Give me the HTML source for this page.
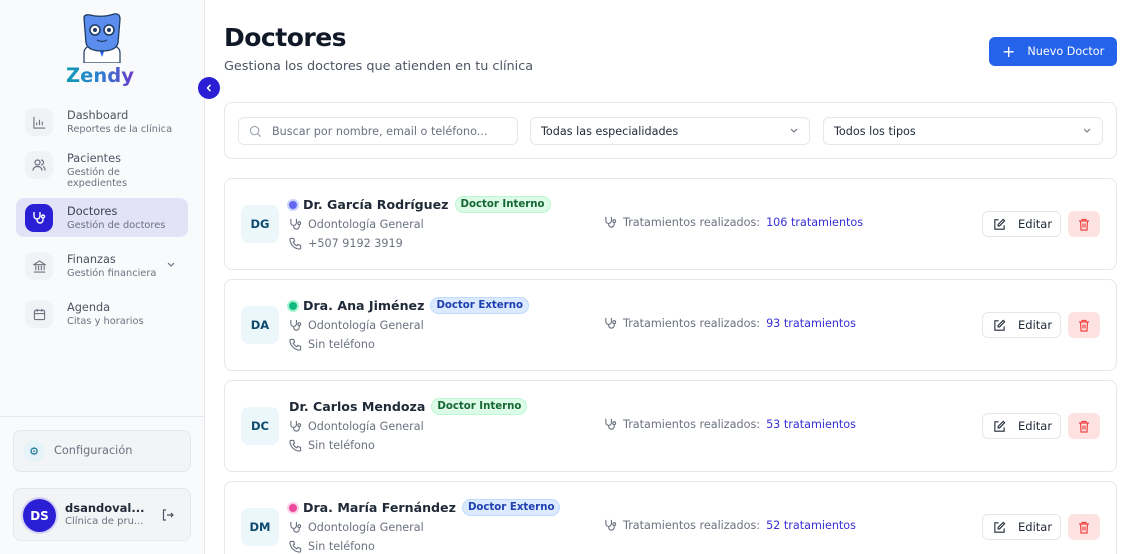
<!DOCTYPE html>
<html style="height:554px;overflow:hidden"><head><meta charset="utf-8"><style>
*{box-sizing:border-box;margin:0;padding:0}
body{width:1136px;height:554px;overflow:hidden;font-family:"DejaVu Sans","Liberation Sans",sans-serif;background:#fff;position:relative;color:#111827}
.sb{position:absolute;left:0;top:0;width:205px;height:554px;background:#f9fafb;border-right:1px solid #e5e7eb}
.abs{position:absolute}
.nav{position:absolute;left:16px;width:172px;height:40px;border-radius:8px}
.nav .ic{position:absolute;left:9px;top:6px;width:28px;height:28px;border-radius:9px;background:#f1f2f5;display:flex;align-items:center;justify-content:center}
.nav .t{position:absolute;left:51px;top:7px;font-size:11.3px;color:#4b5563}
.nav .s{position:absolute;left:51px;top:22px;font-size:9.8px;color:#6b7280;line-height:11px;width:130px}
.card{position:absolute;left:224px;width:893px;height:92px;border:1px solid #e5e7eb;border-radius:8px;background:#fff}
.av{position:absolute;left:16px;top:26px;width:38px;height:38px;border-radius:8px;background:#ecf7fc;color:#0c4a6e;font-weight:bold;font-size:11.5px;display:flex;align-items:center;justify-content:center}
.nm{position:absolute;left:62px;top:17px;font-size:12.6px;font-weight:bold;color:#1f2937;display:flex;align-items:center;white-space:nowrap}
.dot{width:12px;height:12px;border-radius:50%;margin-right:4px;border:2px solid}
.bd{font-size:10.2px;font-weight:bold;padding:2px 5px;border-radius:9px;margin-left:6px}
.bi{background:#dcfce7;color:#166534;border:1px solid #bbf7d0}
.be{background:#dbeafe;color:#1e40af;border:1px solid #bfdbfe}
.ln{position:absolute;left:64px;font-size:11.2px;color:#6b7280;display:flex;align-items:center;white-space:nowrap}
.ln svg{margin-right:6px}
.tr{position:absolute;left:379px;top:37px;font-size:11.2px;color:#6b7280;display:flex;align-items:center;white-space:nowrap}
.tr b{font-weight:normal;color:#3730d6;margin-left:6px}
.ed{position:absolute;left:757px;top:32px;width:79px;height:26px;border:1px solid #e5e7eb;border-radius:6px;font-size:11.5px;color:#1f2937;display:flex;align-items:center;padding-left:10px}
.ed span{margin-left:12px}
.dl{position:absolute;left:843px;top:32px;width:32px;height:26px;background:#fee2e2;border-radius:6px;display:flex;align-items:center;justify-content:center}
.inp{position:absolute;top:14px;height:28px;border:1px solid #e5e7eb;border-radius:6px;font-size:11.2px;color:#1f2937;display:flex;align-items:center;padding-left:10px}
</style></head><body>
<div class="sb">
 <svg class="abs" style="left:80px;top:13px" width="44" height="50" viewBox="0 0 44 50">
  <path d="M4 40 Q4 34 12 32 L32 32 Q40 34 40 40 L40 50 L4 50Z" fill="#fff" stroke="#1e3a5f" stroke-width="1.2"/>
  <path d="M18 33 L22 44 L26 33Z" fill="#2563eb"/>
  <path d="M4 5 Q4 1 10 2 Q22 5 34 1 Q40 0 40 6 L38 30 Q36 38 22 38 Q8 38 6 30Z" fill="#5b8def" stroke="#1e3a5f" stroke-width="1.3"/>
  <circle cx="15" cy="17" r="5" fill="#fff" stroke="#1e3a5f" stroke-width="1.5"/><circle cx="29" cy="17" r="5" fill="#fff" stroke="#1e3a5f" stroke-width="1.5"/>
  <circle cx="15" cy="17" r="2" fill="#1e3a5f"/><circle cx="29" cy="17" r="2" fill="#1e3a5f"/>
  <path d="M17 27 Q22 30 27 27" fill="none" stroke="#1e3a5f" stroke-width="1.2"/>
 </svg>
 <div class="abs" style="left:66px;top:64px;font-size:19.5px;font-weight:bold;background:linear-gradient(90deg,#0e9bb5,#2e7fd0 50%,#6a3bc8);-webkit-background-clip:text;color:transparent">Zendy</div>
 <div class="nav" style="top:102px"><div class="ic"><svg width="13" height="13" viewBox="0 0 14 14" fill="none" stroke="#6b7280" stroke-width="1.2"><path d="M1 1v12h12M4 10V7M7 10V4M10 10V6"/></svg></div><div class="t">Dashboard</div><div class="s">Reportes de la clínica</div></div>
 <div class="nav" style="top:145px"><div class="ic"><svg width="14" height="14" viewBox="0 0 14 14" fill="none" stroke="#6b7280" stroke-width="1.2"><circle cx="5.5" cy="4.5" r="2.5"/><path d="M1 12.5c0-2.5 2-4 4.5-4s4.5 1.5 4.5 4M9 2a2.5 2.5 0 010 5M11 8.5c1.3.5 2 1.8 2 4"/></svg></div><div class="t">Pacientes</div><div class="s" style="width:70px">Gestión de expedientes</div></div>
 <div class="nav" style="top:198px;background:#e2e3f7;height:39px"><div class="ic" style="background:#2b1fd6;top:6px"><svg width="14" height="14" viewBox="0 0 14 14" fill="none" stroke="#fff" stroke-width="1.4"><path d="M2 1v4a3 3 0 006 0V1M5 8v1a3 3 0 006 0V7"/><circle cx="11" cy="5.5" r="1.5"/></svg></div><div class="t" style="color:#374151">Doctores</div><div class="s">Gestión de doctores</div></div>
 <div class="nav" style="top:246px"><div class="ic"><svg width="13" height="13" viewBox="0 0 14 14" fill="none" stroke="#6b7280" stroke-width="1.2"><path d="M1 5L7 1l6 4zM3 6v5M6 6v5M9 6v5M12 6v5M1 13h12"/></svg></div><div class="t">Finanzas</div><div class="s">Gestión financiera</div><svg class="abs" style="left:150px;top:15px" width="10" height="8" viewBox="0 0 10 8" fill="none" stroke="#6b7280" stroke-width="1.2"><path d="M2 2l3 3 3-3"/></svg></div>
 <div class="nav" style="top:294px"><div class="ic"><svg width="13" height="13" viewBox="0 0 14 14" fill="none" stroke="#6b7280" stroke-width="1.2"><rect x="1.5" y="2.5" width="11" height="10" rx="1.5"/><path d="M1.5 6h11M4.5 1v3M9.5 1v3"/></svg></div><div class="t">Agenda</div><div class="s">Citas y horarios</div></div>
 <div class="abs" style="left:0;top:416px;width:204px;border-top:1px solid #e5e7eb"></div>
 <div class="abs" style="left:13px;top:430px;width:178px;height:42px;border:1px solid #e5e7eb;border-radius:8px;background:#f3f4f6"><div class="abs" style="left:9px;top:9px;width:22px;height:22px;border-radius:50%;background:#e6f4fa;display:flex;align-items:center;justify-content:center;color:#0e6b8a;font-size:11px">⚙</div><div class="abs" style="left:40px;top:13px;font-size:11.3px;color:#6b7280">Configuración</div></div>
 <div class="abs" style="left:13px;top:488px;width:178px;height:53px;border:1px solid #e5e7eb;border-radius:8px;background:#f3f4f6"><div class="abs" style="left:9px;top:10px;width:33px;height:33px;border-radius:50%;background:#2b1fd6;box-shadow:0 0 0 2px #d4d2f5;color:#fff;font-weight:bold;font-size:12px;display:flex;align-items:center;justify-content:center">DS</div><div class="abs" style="left:51px;top:12px;font-size:11.5px;font-weight:bold;color:#1f2937">dsandoval...</div><div class="abs" style="left:51px;top:27px;font-size:10px;color:#6b7280">Clínica de pru...</div><svg class="abs" style="left:147px;top:19px" width="14" height="14" viewBox="0 0 14 14" fill="none" stroke="#4b5563" stroke-width="1.2"><path d="M5 2H2.5v10H5M6 7h6M10 5l2 2-2 2"/></svg></div>
</div>
<div class="abs" style="left:198px;top:77px;width:22px;height:22px;border-radius:50%;background:#2b1fd6;display:flex;align-items:center;justify-content:center"><svg width="8" height="10" viewBox="0 0 8 10" fill="none" stroke="#fff" stroke-width="1.5"><path d="M5.5 2L2.5 5l3 3"/></svg></div>

<div class="abs" style="left:224px;top:23px;font-size:25px;font-weight:bold;color:#111827;letter-spacing:-0.5px">Doctores</div>
<div class="abs" style="left:224px;top:59px;font-size:12.8px;color:#4b5563">Gestiona los doctores que atienden en tu clínica</div>
<div class="abs" style="left:989px;top:37px;width:128px;height:29px;background:#2563eb;border-radius:6px;color:#fff;font-size:11.2px;display:flex;align-items:center;padding-left:13px"><span style="font-size:16px;margin-right:12px">+</span>Nuevo Doctor</div>

<div class="abs" style="left:224px;top:102px;width:893px;height:57px;border:1px solid #e5e7eb;border-radius:8px">
 <div class="inp" style="left:13px;width:280px;color:#6b7280"><svg width="13" height="13" viewBox="0 0 14 14" fill="none" stroke="#9ca3af" stroke-width="1.2" style="margin-right:10px"><circle cx="6" cy="6" r="4.5"/><path d="M9.5 9.5l3 3"/></svg>Buscar por nombre, email o teléfono...</div>
 <div class="inp" style="left:305px;width:280px">Todas las especialidades<svg class="abs" style="right:10px" width="10" height="8" viewBox="0 0 10 8" fill="none" stroke="#6b7280" stroke-width="1.1"><path d="M2 2l3 3 3-3"/></svg></div>
 <div class="inp" style="left:598px;width:280px">Todos los tipos<svg class="abs" style="right:10px" width="10" height="8" viewBox="0 0 10 8" fill="none" stroke="#6b7280" stroke-width="1.1"><path d="M2 2l3 3 3-3"/></svg></div>
</div>

<div class="card" style="top:178px">
 <div class="av">DG</div>
 <div class="nm"><span class="dot" style="background:#6366f1;border-color:#c7d2fe"></span>Dr. García Rodríguez<span class="bd bi">Doctor Interno</span></div>
 <div class="ln" style="top:39px"><svg width="13" height="13" viewBox="0 0 14 14" fill="none" stroke="#6b7280" stroke-width="1.2"><path d="M2 1v4a3 3 0 006 0V1M5 8v1a3 3 0 006 0V7"/><circle cx="11" cy="5.5" r="1.5"/></svg>Odontología General</div>
 <div class="ln" style="top:58px"><svg width="13" height="13" viewBox="0 0 14 14" fill="none" stroke="#6b7280" stroke-width="1.2"><path d="M2 1.5h3l1 3-1.5 1a8 8 0 004 4l1-1.5 3 1v3a1 1 0 01-1 1A11 11 0 011 2.5a1 1 0 011-1z"/></svg>+507 9192 3919</div>
 <div class="tr"><svg width="13" height="13" viewBox="0 0 14 14" fill="none" stroke="#6b7280" stroke-width="1.2" style="margin-right:6px"><path d="M2 1v4a3 3 0 006 0V1M5 8v1a3 3 0 006 0V7"/><circle cx="11" cy="5.5" r="1.5"/></svg>Tratamientos realizados:<b>106 tratamientos</b></div>
 <div class="ed"><svg width="13" height="13" viewBox="0 0 14 14" fill="none" stroke="#1f2937" stroke-width="1.2"><path d="M6 2H2v10h10V8M11 1.5l1.5 1.5L7 8.5H5.5V7z"/></svg><span>Editar</span></div>
 <div class="dl"><svg width="12" height="13" viewBox="0 0 12 13" fill="none" stroke="#ef4444" stroke-width="1.2"><path d="M1 3h10M4 3V1.5h4V3M2.5 3l.5 9h6l.5-9M5 5.5v4M7 5.5v4"/></svg></div>
</div>
<div class="card" style="top:279px">
 <div class="av">DA</div>
 <div class="nm"><span class="dot" style="background:#10b981;border-color:#a7f3d0"></span>Dra. Ana Jiménez<span class="bd be">Doctor Externo</span></div>
 <div class="ln" style="top:39px"><svg width="13" height="13" viewBox="0 0 14 14" fill="none" stroke="#6b7280" stroke-width="1.2"><path d="M2 1v4a3 3 0 006 0V1M5 8v1a3 3 0 006 0V7"/><circle cx="11" cy="5.5" r="1.5"/></svg>Odontología General</div>
 <div class="ln" style="top:58px"><svg width="13" height="13" viewBox="0 0 14 14" fill="none" stroke="#6b7280" stroke-width="1.2"><path d="M2 1.5h3l1 3-1.5 1a8 8 0 004 4l1-1.5 3 1v3a1 1 0 01-1 1A11 11 0 011 2.5a1 1 0 011-1z"/></svg>Sin teléfono</div>
 <div class="tr"><svg width="13" height="13" viewBox="0 0 14 14" fill="none" stroke="#6b7280" stroke-width="1.2" style="margin-right:6px"><path d="M2 1v4a3 3 0 006 0V1M5 8v1a3 3 0 006 0V7"/><circle cx="11" cy="5.5" r="1.5"/></svg>Tratamientos realizados:<b>93 tratamientos</b></div>
 <div class="ed"><svg width="13" height="13" viewBox="0 0 14 14" fill="none" stroke="#1f2937" stroke-width="1.2"><path d="M6 2H2v10h10V8M11 1.5l1.5 1.5L7 8.5H5.5V7z"/></svg><span>Editar</span></div>
 <div class="dl"><svg width="12" height="13" viewBox="0 0 12 13" fill="none" stroke="#ef4444" stroke-width="1.2"><path d="M1 3h10M4 3V1.5h4V3M2.5 3l.5 9h6l.5-9M5 5.5v4M7 5.5v4"/></svg></div>
</div>
<div class="card" style="top:380px">
 <div class="av">DC</div>
 <div class="nm" style="left:64px">Dr. Carlos Mendoza<span class="bd bi">Doctor Interno</span></div>
 <div class="ln" style="top:39px"><svg width="13" height="13" viewBox="0 0 14 14" fill="none" stroke="#6b7280" stroke-width="1.2"><path d="M2 1v4a3 3 0 006 0V1M5 8v1a3 3 0 006 0V7"/><circle cx="11" cy="5.5" r="1.5"/></svg>Odontología General</div>
 <div class="ln" style="top:58px"><svg width="13" height="13" viewBox="0 0 14 14" fill="none" stroke="#6b7280" stroke-width="1.2"><path d="M2 1.5h3l1 3-1.5 1a8 8 0 004 4l1-1.5 3 1v3a1 1 0 01-1 1A11 11 0 011 2.5a1 1 0 011-1z"/></svg>Sin teléfono</div>
 <div class="tr"><svg width="13" height="13" viewBox="0 0 14 14" fill="none" stroke="#6b7280" stroke-width="1.2" style="margin-right:6px"><path d="M2 1v4a3 3 0 006 0V1M5 8v1a3 3 0 006 0V7"/><circle cx="11" cy="5.5" r="1.5"/></svg>Tratamientos realizados:<b>53 tratamientos</b></div>
 <div class="ed"><svg width="13" height="13" viewBox="0 0 14 14" fill="none" stroke="#1f2937" stroke-width="1.2"><path d="M6 2H2v10h10V8M11 1.5l1.5 1.5L7 8.5H5.5V7z"/></svg><span>Editar</span></div>
 <div class="dl"><svg width="12" height="13" viewBox="0 0 12 13" fill="none" stroke="#ef4444" stroke-width="1.2"><path d="M1 3h10M4 3V1.5h4V3M2.5 3l.5 9h6l.5-9M5 5.5v4M7 5.5v4"/></svg></div>
</div>
<div class="card" style="top:481px">
 <div class="av">DM</div>
 <div class="nm"><span class="dot" style="background:#ec4899;border-color:#fbcfe8"></span>Dra. María Fernández<span class="bd be">Doctor Externo</span></div>
 <div class="ln" style="top:39px"><svg width="13" height="13" viewBox="0 0 14 14" fill="none" stroke="#6b7280" stroke-width="1.2"><path d="M2 1v4a3 3 0 006 0V1M5 8v1a3 3 0 006 0V7"/><circle cx="11" cy="5.5" r="1.5"/></svg>Odontología General</div>
 <div class="ln" style="top:58px"><svg width="13" height="13" viewBox="0 0 14 14" fill="none" stroke="#6b7280" stroke-width="1.2"><path d="M2 1.5h3l1 3-1.5 1a8 8 0 004 4l1-1.5 3 1v3a1 1 0 01-1 1A11 11 0 011 2.5a1 1 0 011-1z"/></svg>Sin teléfono</div>
 <div class="tr"><svg width="13" height="13" viewBox="0 0 14 14" fill="none" stroke="#6b7280" stroke-width="1.2" style="margin-right:6px"><path d="M2 1v4a3 3 0 006 0V1M5 8v1a3 3 0 006 0V7"/><circle cx="11" cy="5.5" r="1.5"/></svg>Tratamientos realizados:<b>52 tratamientos</b></div>
 <div class="ed"><svg width="13" height="13" viewBox="0 0 14 14" fill="none" stroke="#1f2937" stroke-width="1.2"><path d="M6 2H2v10h10V8M11 1.5l1.5 1.5L7 8.5H5.5V7z"/></svg><span>Editar</span></div>
 <div class="dl"><svg width="12" height="13" viewBox="0 0 12 13" fill="none" stroke="#ef4444" stroke-width="1.2"><path d="M1 3h10M4 3V1.5h4V3M2.5 3l.5 9h6l.5-9M5 5.5v4M7 5.5v4"/></svg></div>
</div>
</body></html>
